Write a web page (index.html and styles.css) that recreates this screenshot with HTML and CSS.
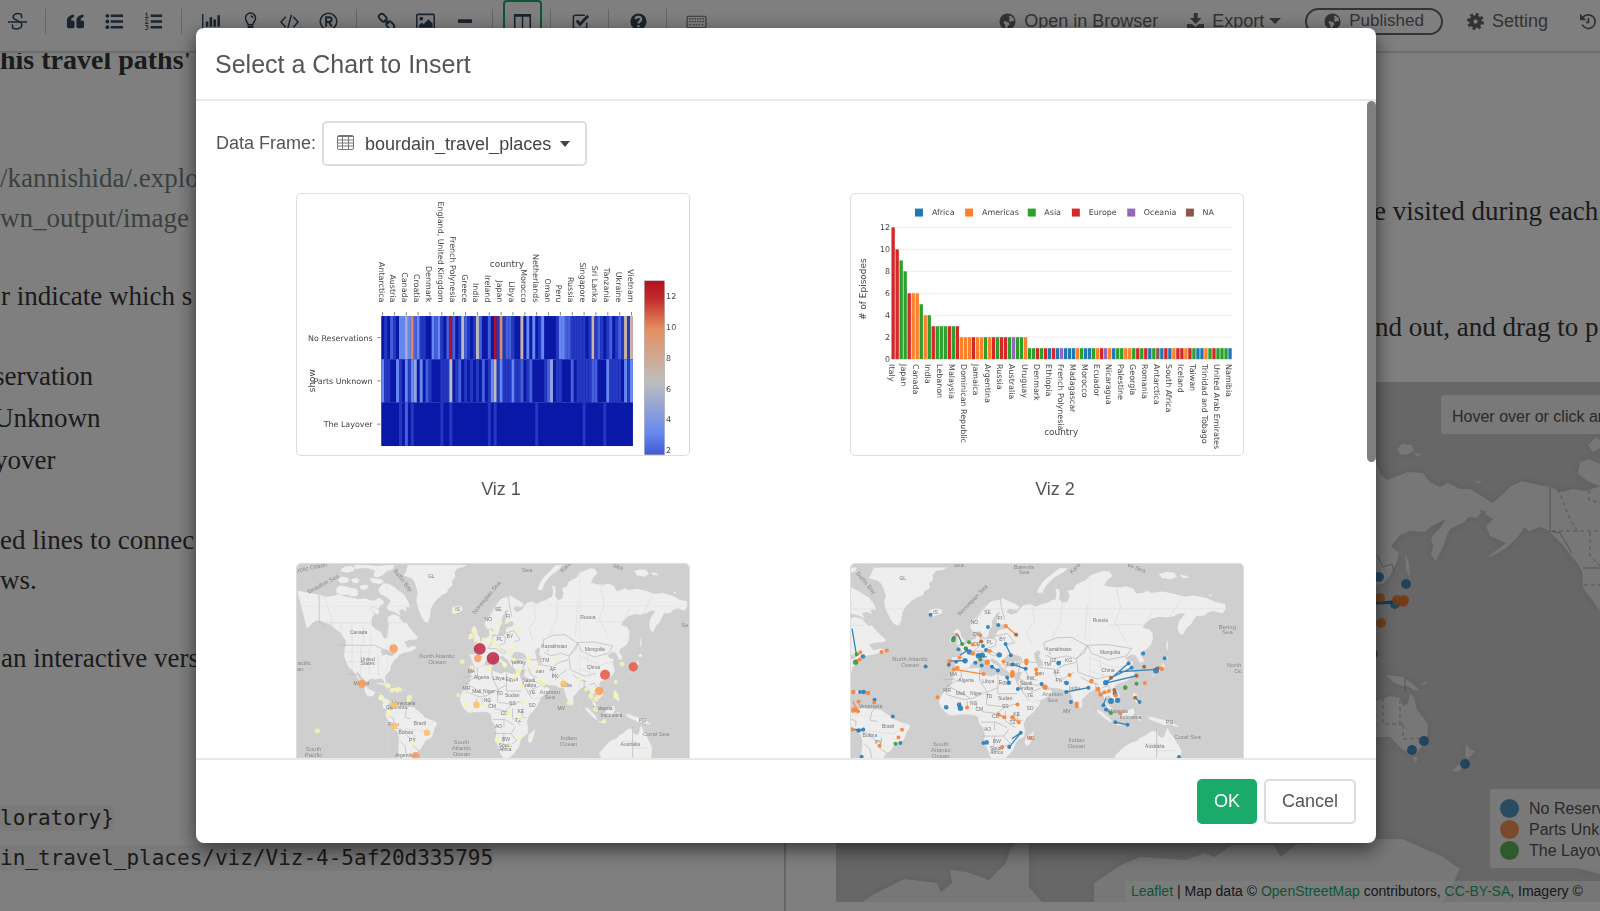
FILE: index.html
```html
<!DOCTYPE html>
<html lang="en">
<head>
<meta charset="utf-8">
<title>Select a Chart to Insert</title>
<link rel="stylesheet" href="styles.css">
</head>
<body>
<div class="app">
  <header class="toolbar">
    <div class="tools">
      <button class="tool" aria-label="Strikethrough"><svg class="icon" viewBox="0 0 20 20"><path d="M0 9.700h20v1.600H0z"/><path class="line" d="M14.500 6.500L14 2.500C9 .5 5 2.500 5.500 6c.4 2.500 8.500 3.500 9 7 .5 4-4.500 6-9.500 4l-.5-4"/></svg></button>
      <i class="sep"></i>
      <button class="tool" aria-label="Quote"><svg class="icon" viewBox="0 0 20 20"><path d="M8.500 3v2.200C6.500 5.500 5.300 7 5.300 9H7c1.200 0 2 .8 2 2v4c0 1.200-.8 2-2 2H3c-1.200 0-2-.8-2-2V9.500C1 5.500 4 3 8.500 3zm10 0v2.200c-2 .3-3.200 1.800-3.200 3.800H17c1.200 0 2 .8 2 2v4c0 1.200-.8 2-2 2h-4c-1.200 0-2-.8-2-2V9.500C11 5.500 14 3 18.500 3z"/></svg></button>
      <button class="tool" aria-label="Bulleted list"><svg class="icon" viewBox="0 0 20 20"><circle cx="2.500" cy="4" r="2"/><circle cx="2.500" cy="10" r="2"/><circle cx="2.500" cy="16" r="2"/><path d="M6 2.700h13v2.600H6zM6 8.700h13v2.600H6zM6 14.700h13v2.600H6z"/></svg></button>
      <button class="tool" aria-label="Numbered list"><svg class="icon" viewBox="0 0 20 20"><path d="M7 2.700h12v2.600H7zM7 8.700h12v2.600H7zM7 14.700h12v2.600H7z"/><path class="fine" d="M1.500 2L3 1v5M1 6h4M1 8.500c2-1.500 3.500 0 2.500 1.300L1.200 12H5M1.200 14.200h3L2.800 16c3-.2 2 3.500-1.800 2.500"/></svg></button>
      <i class="sep"></i>
      <button class="tool" aria-label="Chart"><svg class="icon" viewBox="0 0 20 20"><path d="M0 2h1.500v15H20v1.500H0zM4 10h2.700v5.500H4zM8 5.500h2.700v10H8zM12 8h2.700v7.500H12zM16.200 3.500h2.700v12h-2.700z"/></svg></button>
      <button class="tool" aria-label="Parameter"><svg class="icon" viewBox="0 0 20 20"><path class="line" d="M7.500 13.500c0-2.500-2.800-3.700-2.800-7.200a5.300 5.300 0 0 1 10.600 0c0 3.500-2.800 4.700-2.800 7.200zM10 4.200c1.500 0 2.300.7 2.400 2"/><path d="M7 14.500h6V18l-1.500 1.500h-3L7 18z"/></svg></button>
      <button class="tool" aria-label="Code"><svg class="icon" viewBox="0 0 20 20"><path class="line" d="M6 5l-5 5.500L6 16M14 5l5 5.500-5 5.500M12 3L8 18"/></svg></button>
      <button class="tool" aria-label="R script"><svg class="icon" viewBox="0 0 20 20"><circle class="line" cx="10" cy="10" r="8.700"/><path class="bold" d="M7.500 15.500v-10h3c3.800 0 3.800 5 0 5h-3M10.500 10.500l3 5"/></svg></button>
      <i class="sep"></i>
      <button class="tool" aria-label="Link"><svg class="icon" viewBox="0 0 20 20"><g class="bold"><rect x="1.500" y="3" width="9" height="6" rx="3" transform="rotate(45 6 6)"/><rect x="9.500" y="11" width="9" height="6" rx="3" transform="rotate(45 14 14)"/><path d="M8 8l4.500 4.500"/></g></svg></button>
      <button class="tool" aria-label="Image"><svg class="icon" viewBox="0 0 20 20"><rect class="line" x="0.800" y="2.500" width="18.400" height="16" rx="1"/><circle cx="5.500" cy="7" r="2"/><path d="M3 16.500V14l3-3 2 2 5-5.500 4.500 4.500v4.500z"/></svg></button>
      <button class="tool" aria-label="Horizontal rule"><svg class="icon" viewBox="0 0 20 20"><rect x="3" y="7.500" width="15" height="4" rx="1"/></svg></button>
      <i class="sep"></i>
      <button class="tool tool-active" aria-label="Split view"><svg class="icon" viewBox="0 0 20 20"><path d="M1 2h18v16.500H1zm1.700 3v12h6.500V5zm8.100 0v12h6.500V5z" fill-rule="evenodd"/></svg></button>
      <i class="sep"></i>
      <button class="tool" aria-label="Tasks"><svg class="icon" viewBox="0 0 20 20"><path class="line" d="M16.500 11v4.500a2 2 0 0 1-2 2h-10a2 2 0 0 1-2-2v-10a2 2 0 0 1 2-2h10"/><path class="heavy" d="M6 9l3.500 4L18 4"/></svg></button>
      <i class="sep"></i>
      <button class="tool" aria-label="Help"><svg class="icon" viewBox="0 0 20 20"><circle cx="10" cy="10" r="8.500"/><path class="mark" d="M7 7.500C7.500 4 13 4.500 12.700 8c-.2 2-2.700 2-2.700 4M10 13.700v2.300"/></svg></button>
      <i class="sep"></i>
      <button class="tool" aria-label="Keyboard"><svg class="icon icon-grey" viewBox="0 0 20 20"><rect class="fine" x="1" y="5" width="18" height="11" rx="1"/><path class="fine" d="M3 7.500h14M3 10h14M3 13h2M6.500 13h7M15 13h2" stroke-dasharray="1.500 1"/></svg></button>
    </div>
    <nav class="actions">
      <button class="action"><svg class="icon icon-sm" viewBox="0 0 20 20"><path fill-rule="evenodd" d="M10 .5a9.500 9.500 0 1 0 0 19 9.500 9.500 0 0 0 0-19zM13 3l4 3 1 4-2.500-1-2 1.500-2-2L13 6l-1.500-1.500zM7 9.500l4 1.500 1.500 2-2 2.500-1 2.500-2-1-.5-3.500L5 11z"/></svg>Open in Browser</button>
      <button class="action action-export"><svg class="icon icon-sm" viewBox="0 0 20 20"><path d="M8 0h4.500v6H17l-6.800 7L3.500 6H8zM0 13h6l4 3.500 4-3.500h6v6H0z"/></svg>Export<i class="caret"></i></button>
      <button class="action action-pill"><svg class="icon icon-sm" viewBox="0 0 20 20"><path fill-rule="evenodd" d="M10 .5a9.500 9.500 0 1 0 0 19 9.500 9.500 0 0 0 0-19zM13 3l4 3 1 4-2.500-1-2 1.500-2-2L13 6l-1.500-1.500zM7 9.500l4 1.500 1.500 2-2 2.500-1 2.500-2-1-.5-3.500L5 11z"/></svg>Published</button>
      <button class="action"><svg class="icon icon-sm" viewBox="0 0 20 20"><circle cx="10" cy="10" r="5" fill="none" stroke-width="5" stroke="currentColor"/><circle cx="10" cy="10" r="8" fill="none" stroke="currentColor" stroke-width="4" stroke-dasharray="3.280 3"/></svg>Setting</button>
      <button class="action action-history" aria-label="History"><svg class="icon icon-sm" viewBox="0 0 20 20"><path class="bold" d="M3 6a8 8 0 1 1-.5 7.500M10 5.500V11H7"/><path d="M0 1v7.500h7.500z"/></svg></button>
    </nav>
  </header>
  <main class="panes">
    <section class="pane editor">
      <h2 class="prose headline">his travel paths'</h2>
      <p class="prose prose-link">/kannishida/.explo<br>wn_output/image</p>
      <p class="prose prose-a">r indicate which s</p>
      <ul class="prose prose-list"><li>servation</li><li>Unknown</li><li>yover</li></ul>
      <p class="prose prose-b">ed lines to connec<br>ws.</p>
      <p class="prose prose-a">an interactive vers</p>
      <div class="snippets"><code>loratory}</code><code>in_travel_places/viz/Viz-4-5af20d335795</code></div>
    </section>
    <section class="pane preview">
      <p class="prose caption-a">e visited during each</p>
      <p class="prose caption-b">nd out, and drag to p</p>
      <div class="bigmap">
        <svg class="bigmap-canvas" viewBox="836 382 764 520" preserveAspectRatio="xMinYMin slice" aria-hidden="true">
          <g class="land">
            <path d="M1370 462l7 3 4 10 6 5 8-3 13-5 15 1 7 9 10 5 8-4 12 6 10 0 15 9 11 8-4 7-12-3 1 3-4 5-8-1-6 6-13 6-3 6-4 12-7 14-5-6 2-9-2-7 4-6 6-6 5-8-14 7-7 6-15-1-10 4-9 11 8 7-2 8-7 15-7 8-9 1z"/>
            <path d="M1397 449l5-5 10 1 2 6-8 4-6-1zM1414 452l8 3-6 1zM1475 482l7-2-4 4zM1405 553l4 10 1 14-4-7z"/>
            <path d="M1503 494l8-8 11-5 12 3 16 3 12 5 11-3 13 2 14-5v125l-7-10-6-7-4-7-1-16-5-8-5-6-9-12-8-8-7-7-8-3-11 4-5-4-6 10-13 12-11 6-8 3 20-15-5-2-11-5-4-10 7-7-8-5 5-9z"/>
            <path d="M1588 445l8-8 4 3v8l-7 4zM1580 462l9-3 11 5v22l-11-4-11-8z"/>
            <path d="M1370 703l6-2 14-5 10 2 3 8 5-3 2-9 4 3 3 13 6 7 5 8-1 14-10 14-14-3-7-7-6-6-14 0-6 2zM1412 757h6l-2 6z"/>
            <path d="M1386 675l17 2 9 6 8 8-6-1-7-4-5 0-9-4zM1420 684l8-3-4 4zM1448 713l4 3M1466 743l4 6 5 2-7 8-3-3zM1463 760l3 4-8 8-6-1z"/>
            <path d="M862 902l14-9 28-14 33 4 4 9 11-9-2-13 17 2 22 8 17-17 4-13 7-9h12v46l13 15zM1094 902v-19l27-18 19-8 46 3 19-7 9 4 18-12h42l7 12 14-12 81-6 27 0 24 11 13 5 20 14-7 15-10 18z"/>
            <path d="M1576 868l8-9 16 5v10z"/>
          </g>
          <g class="bigmap-lines">
            <path d="M1550 487v44l10 2 12 20M1583 568h17M1377 555l6 12 9-3 2 8"/>
            <path class="dashed" d="M1558 489l12 30 8 13M1552 531h48M1590 532v24l10 10M1584 585h16M1383 698v26h20M1400 700v24M1403 725v14l24-1M1589 490v10l11 3"/>
            <path d="M1405 678v14"/>
          </g>
          <path d="M1370 603q14 0 25-1" fill="none" stroke="#1f77b4" stroke-width="3"/>
          <g fill="#1f77b4" fill-opacity=".8">
            <circle cx="1379" cy="577" r="5"/><circle cx="1406" cy="584" r="5"/><circle cx="1395" cy="604" r="5"/><circle cx="1373" cy="654" r="5"/><circle cx="1424" cy="741" r="5"/><circle cx="1412" cy="750" r="5"/><circle cx="1465" cy="764" r="5"/>
          </g>
          <g fill="#e87722" fill-opacity=".85">
            <circle cx="1380" cy="598" r="5"/><circle cx="1397" cy="600" r="5"/><circle cx="1403" cy="602" r="5"/><circle cx="1404" cy="600" r="5"/><circle cx="1381" cy="623" r="5"/>
          </g>
        </svg>
        <div class="hint">Hover over or click an</div>
        <ul class="legend">
          <li><i class="dot dot-blue"></i>No Reservations</li>
          <li><i class="dot dot-orange"></i>Parts Unknown</li>
          <li><i class="dot dot-green"></i>The Layover</li>
        </ul>
        <div class="credit"><a href="#leaflet">Leaflet</a> | Map data © <a href="#osm">OpenStreetMap</a> contributors, <a href="#license">CC-BY-SA</a>, Imagery ©</div>
      </div>
    </section>
  </main>
</div>

<div class="overlay">
  <div class="modal" role="dialog" aria-labelledby="modal-title">
    <div class="modal-head"><h1 id="modal-title">Select a Chart to Insert</h1></div>
    <div class="modal-body">
      <div class="frame-row">
        <label for="frame">Data Frame:</label>
        <div class="picker">
          <svg class="picker-icon" viewBox="0 0 17 15"><rect x="0.500" y="0.500" width="16" height="14" rx="1.500"/><path d="M1 1.500h15M1 5h15M1 8h15M1 11h15M5.500 2v12M11.500 2v12"/></svg>
          <select id="frame"><option>bourdain_travel_places</option></select>
          <i class="caret picker-caret"></i>
        </div>
      </div>
      <div class="charts">
        <figure><svg class="thumb" id="heatmap" viewBox="18 25 1180 786"></svg><figcaption>Viz 1</figcaption></figure>
        <figure><svg class="thumb" id="bars" viewBox="31 25 1180 786"></svg><figcaption>Viz 2</figcaption></figure>
        <figure><svg class="thumb thumb-map" id="bubbles" viewBox="18 25 1180 786">
          <g id="world">
            <g class="land">
              <path d="M18 105l20 3 28 5 20 4 22 6 20-3 18-6 14 7 20 4 22 5 24-2 14 6 12 0 12-8 10 4 8 12-12 10-8 10-10 12-8 16 0 20 12 12 14 6 8 14 4 8 8-6 2-20 2-18-4-12 4-12 14-6 18 5 6 12 8 10 8-3 8 14 10 12 12 14 6 8-10 6-18 1-14 6 6 8 4 8 18-6 10 6-10 8-14 5-18 4-12 6-4 8-8 6-8 10-5 10-1 12-8 8-8 10 2 14 5 12-4 5-7-12-2-8-10-4-12 3-14-2-12 6-8 8-2 14 3 14 7 10 12 1 8-3 4-10 12-2 4 4-6 12-2 8 12 2 3 6-2 12 6 8 9 2 6-1 7 4 12-12 12-6 8 4 20 0 18 5 8 8 14 10 8 10 18 8 16 6 4 8-8 14-4 16-6 12-16 8-8 12-6 12-10 8-8 14-8 14-10 4-3 10-15 90-16 0 0-140 2-30-4-20-12-12-14-18-10-18 1-14 6-10 3-14 2-10-6-4-10-4-8-10-12-6-12-4-16-8-10-12-10-16-8-16-6-6 8 20 8 18-8-8-10-18-12-16-12-10-8-16-6-18 2-20 4-24-8-12-8-12-10-8-12-10-10-8-16-6-10-4-14-2-10 6-8 8-12 10z"/>
              <path d="M136 98l12-10 16 4 14 4 18 2 8 10-4 14-18 2-12-6-18 2-16-8zM142 66l14-4 14 4 8 8-10 8-16 2-10-6zM180 70l18-4 10 8-8 10-14-2zM146 46l16-14 20-2 12 8-8 10-20 4zM188 27l40 0 30 3 40-3 16 0-6 14-22 8-8 10-20 8-10-6 4-16-24-8-34 4zM206 90l22-4 8 8-14 10-12-2zM236 66l34 4 12 8-14 8-24-4zM266 96l12-14 16 2 18 10 14 12 16 12 12 20 6 18-14 0 4 14-14-8-10 4 6 16-18-10-18-6-10-8 8-12 6-10-16-12-16-8-6-14zM238 158l14-4 14 10 0 14-16-4z"/>
              <path d="M352 27l180 0-12 8-18 4-8 12 2 14-10 10 2 14-14 12-2 10-16 8-14 12-12 14-8 18-2 22-7 19-10-4-10-14-6-16-7-18-3-20 4-18-4-18-6-18-8-10-14-4-10-4 6-10z"/>
              <path d="M484 158l10-6 12-2 12 6-1 10-12 6-10 4-9-6zM545 218l8-8 8 12 2 14 8 12-2 10-20 4 4-14-2-10-6-8zM536 240l7-8 4 8-4 12-9 2zM250 384l20-2 18 6 18 8-14 2-16-8zM302 400l12-2 14 6-12 4-16-2zM334 402l12 2-4 4z"/>
              <path d="M538 298l22-3 4-8-2-12-10-4 2-8 16-2 8-10 14-6 6-6-2-12 8-8 4 10 2 12 12 2 16-2 8-6 0-12 8-8 10-2 8-6-6-8-12 2-8-6 2-14 6-18-6 2-8 16-4 12 2 12-8 10-2 18-8 8-8-4-4-16-10 2-8-2-7-12 2-16 10-12 8-14 8-14 10-14 14-12 10-6 20 0 12 8 16 8 10 10-8 10-18-4-6 8 10 8 14-6 8-12 8-10 18-4 12 8 14-8 14-4 10-8 8-2 2-14-2-20 10 4 2 16-2 14 10 10 10-4 4-16-6-16 16-4 4-12 10-8 16-8 8-14 14-6 20-8 14 2 8 14-12 12-8 16 16 4 22 2 14-4 18 8 6 14 16-2 10-6 10 6 28-4 24 6 28 10 22-4 30 8 22 12 24 6v18l-8 12-22-8-14 6-6 8-20 2-8 14-4 10-10 10-8 16-2 8-10-8-4-16 4-20 8-12 6-10-14 0-12 8-18 4-16-2-20 6-14 14-6 12 16 4 8 14 0 20-6 18-12 12-10 4-2 10 8 12 0 10-10 2-6-14-4-8-10-2-8 6-6 4 8 8 12 2-4 12 4 14 2 12-8 12-12 10-16 6-8 4-4 8 10 14 4 14-8 10-8 6-4-10-8-8-8 2 2 18 12 14 6 14-6-2-12-14-4-16-2-16-6-14-8-8-8 4-12 8-10 12-8 10 2 16-4 10-8-4-10-18-6-18-4-14-12 0-12-6-20-2-16-4-8-12-6 2 8 12 8 8 12-2 8 10-14 12-16 12-18 10-6-2-6-14-10-16-10-18-6-14 6-18 4-14-16 4-14-2-10-10 2-8 14-4 10-4-10 0-12 0-4 4-2 14-6-10-8-14-14-10-6 2 6 10 16 10-2 10-8 4-4-12-14-10-8-14-12 2-10 6-8 8-6 14-14 6-14-2z"/>
              <path d="M546 336l14 3 18-8 24-2 8 4-4 12 14 6 14 4 12-6 20 6 16 0 8 2 6 22 10 18 8 16 10 14 8 6 22-6-4 14-14 22-18 20-6 18 4 18-2 18-16 12-6 12-4 16-12 16-12 14-12 4-12 0-10-14-6-22-8-20 2-22-4-22-10-14-2-18-10-6-18-2-22 2-16 2-12-10-10-14-6-16 4-18 12-20 14-16zM737 517l-2 20-8 24-8 6-6-10 4-20 12-8z"/>
              <path d="M1046 300l8-6 6 8-8 6zM1046 312l4 14-8 12-20 8 4-8 14-12zM1020 346l6 8-6 2zM1054 240l4 20-2 24-4-16zM978 376l4 6-4 10zM974 404l8 4 2 16 8 8-4 10-10-10-6-14zM886 454l14 8 18 20 8 14-8-2-16-14-14-16zM924 498l18 2 14 4-16 1-14-3zM946 470l14-12 14-8 4 14-8 18-14 4-8-6zM982 472l12-2-6 8 6 12-8 0-4-10zM1006 476l16 2 14 6 20 4 16 10 16 12-14-2-14-8-12 4-10-6-10-4-12-6z"/>
              <path d="M952 568l14-12 16-6 8-10 12-6 8-8 10-6 14 2-2 10 10 8 6-4 4-20 5-6 5 16 8 10 8 18 8 16 4 12-4 34-20 40-120-20-18-40z"/>
              <path d="M742 104l6-18 12-20 22-22 16-16 20 0-10 14-22 16-20 24-10 24zM752 106l12-4-4 6zM1034 46l18-6 20 2 8 14-16 8-22-4zM1082 48l20 4 8 8-18 0zM1150 110l14-2-4 8zM870 442l3 8-4 3zM836 440l5 6-3 8z"/>
            </g>
            <path class="water" d="M664 304l10-14 14 0 16 6 6 12-18 4-20 2zM736 286l10-10 6 6-4 14 8 14 2 14-12 2-6-16zM770 282l8 2-2 8zM270 286l18-4 12 8 14 6-12 6-16-4-10 4z"/>
            <g class="borders">
              <path d="M85 120v78l20 16M142 270h110l30 14 20 18 20-16M172 356l30 2 16 14 8 18M295 482l16 10-2 14M360 446l-12 18-4 24 18 4M310 520l24 4 14 16 16 14M330 560l14 14 4 34M372 540l-4 34 18 14"/>
              <path d="M592 195l20-38 20-30 24-4 2 22 8 40M608 238l-4 28-12 14M632 236l14 10-2 18-22 8M648 234l24-8 18 28-18 6M594 280l24 0 22 14 18-2M560 298l18 8M622 272l26 18M660 320l34-4 8 10-4 24M694 316l14-4 34 2M712 330l12 30 20 8M745 328l40 6 6 34M700 362l20 14 28 8M704 368l26 34 22-10"/>
              <path d="M762 276l-2-22 30-14 36-2 38 26-6 20-22 18-22-8-30 8-20-10M864 262l48-2 58 12-12 22-44 12-40-20zM864 264l-26 40 4 40 46 20 30-10M788 336l20-14 28-8M796 376l16-18 20-14M848 358l22 16 22 6M884 374l0 26 14 16M900 390l14-6 8 12"/>
              <path d="M548 364l-30 2M562 340l0 22-34 22 0 28M530 384l54 38M606 336l0 32 18 34-34 20M650 354l0 54 46 0M650 390l-24 12-4 40M596 432l4 20M624 442l44 6 22-8 12 0M530 412l40 14 20-4M560 430v22M576 430l2 20M612 462l34 6 22-20M608 494h34l0 24M612 536h52l12-20M642 536l-4 54M664 538l16 20-36 24M668 460v30l24 20M700 462l-4 24 14 4M642 492l30 18M1030 516v92"/>
            </g>
            <path class="provinces" d="M100 202h230M100 122l20 60 14 90M150 205l2 65M184 202v68M218 202v68M240 240v30M156 290h90M156 320h110M184 270v80M210 270v95M236 280v80M264 300v62M340 520l60 10 30-30M730 130l8 60-20 30 12 40M804 130l-4 60-20 50M864 140l-6 100M934 90l10 60-14 40 26 60M1020 160l-20 40-80 0M1090 120l-30 60M870 300l60 30 40-10M870 340l50 20M892 300l10 60M796 350l40 40M1076 580h-44M1036 560h-36"/>
            <path class="grat" d="M18 152h1180M18 475h1180M290 25v585M870 25v585"/>
          </g>
        </svg><figcaption>Viz 3</figcaption></figure>
        <figure><svg class="thumb thumb-map" id="routes" viewBox="31 25 1180 786"><use href="#world" transform="matrix(1.26 0 0 1 -345 8)"/></svg><figcaption>Viz 4</figcaption></figure>
      </div>
      <div class="scroll-thumb"></div>
    </div>
    <div class="modal-foot"><button class="btn btn-primary">OK</button><button class="btn">Cancel</button></div>
  </div>
</div>
<script src="charts.js"></script>
</body>
</html>
```
FILE: styles.css
```css
* { box-sizing: border-box; }
body { margin: 0; overflow: hidden; background: #fff; color: #555; font-family: "Helvetica Neue", "Liberation Sans", Arial, sans-serif; font-size: 18px; }
button, select { font: inherit; color: inherit; }
h1, h2, p, ul, figure { margin: 0; padding: 0; }
ul { list-style: none; }

.app { display: flex; flex-direction: column; height: 100vh; overflow: hidden; }

/* toolbar */
.toolbar { display: flex; justify-content: space-between; flex: none; height: 53px; border-bottom: 2px solid #ddd; overflow: hidden; }
.tools { display: flex; align-items: flex-start; margin-left: -2px; color: #34495e; }
.tool { width: 39px; height: 43px; padding: 0; border: 1px solid transparent; border-radius: 4px; background: none; display: grid; place-items: center; flex: none; }
.tool-active { border: 2px solid #1aab6b; }
.sep { width: 1px; height: 25px; margin: 9px 10px 0 8px; background: #ccc; flex: none; }
.icon { width: 19px; height: 19px; display: block; fill: currentColor; flex: none; }
.icon-sm { width: 17px; height: 17px; }
.icon-grey { width: 21px; height: 21px; color: #666; }
.line, .fine, .bold, .heavy { fill: none; stroke: currentColor; stroke-width: 1.6; }
.fine { stroke-width: 1; }
.bold { stroke-width: 2; }
.heavy { stroke-width: 3; }
.mark { fill: none; stroke: #fff; stroke-width: 2.4; }
.actions { display: flex; align-items: center; gap: 24px; height: 42px; padding-right: 3px; color: #666; }
.action { display: flex; align-items: center; gap: 8px; padding: 0; border: 0; background: none; white-space: nowrap; }
.action-export { margin-left: 5px; }
.action-history { margin-left: 8px; }
.action-pill { height: 27px; padding: 0 17px; border: 2px solid #666; border-radius: 14px; font-size: 17px; }
.caret { border: 6px solid transparent; border-top: 6px solid currentColor; border-bottom: 0; }
.action .caret { margin-left: -3px; }

/* document behind the dialog */
.panes { display: flex; flex: 1; min-height: 0; }
.pane { overflow: hidden; white-space: nowrap; }
.editor { flex: 0 0 786px; border-right: 2px solid #ccc; }
.preview { flex: 1; padding-left: 50px; }
.prose { font-family: Georgia, "Liberation Serif", serif; font-size: 27px; line-height: 40px; color: #363636; }
.headline { font-size: 28px; margin-top: -13px; }
.prose-link { margin-top: 78px; color: #72827f; }
.prose-a { margin-top: 38px; padding-left: 1px; }
.prose-list { margin: 40px 0 0 -6px; display: grid; gap: 2px; }
.prose-b { margin-top: 40px; }
.snippets { display: flex; flex-direction: column; align-items: flex-start; gap: 14px; margin-top: 127px; }
.snippets code { font: 21px/26px "DejaVu Sans Mono", monospace; color: #363636; background: #f4f4f4; border-radius: 3px; }
.caption-a { margin-top: 138px; padding-left: 538px; }
.caption-b { margin-top: 76px; padding-left: 539px; }
.bigmap { position: relative; margin-top: 35px; height: 520px; background: #cfcfcf; overflow: hidden; }
.bigmap-canvas { display: block; width: 100%; height: 100%; }
.land { fill: #eee; stroke: #c6c6c6; stroke-width: 1; }
.bigmap .land { stroke: none; filter: drop-shadow(0 0 4px #bbb); }
.bigmap-lines { fill: none; stroke: #aaa; }
.dashed { stroke-dasharray: 4 3; }
.hint { position: absolute; top: 13px; left: 605px; padding: 5px 11px 0; font-size: 16px; line-height: 34px; background: #f2f2f2; border-radius: 3px; color: #555; }
.legend { position: absolute; top: 407px; left: 654px; padding: 9px 10px 7px; font-size: 16px; line-height: 21px; background: #f2f2f2; border-radius: 2px; }
.legend li { display: flex; align-items: center; gap: 10px; }
.dot { width: 19px; height: 19px; border-radius: 50%; opacity: .75; }
.dot-blue { background: #1f77b4; }
.dot-orange { background: #f57520; }
.dot-green { background: #2ca02c; }
.credit { position: absolute; bottom: 0; left: 289px; right: 0; padding: 0 6px; font-size: 14px; line-height: 21px; color: #333; background: rgba(255, 255, 255, .6); }
.credit a { color: #1aab6b; text-decoration: none; }

/* dialog */
.overlay { position: fixed; inset: 0; padding: 28px 224px 68px 196px; background: rgba(0, 0, 0, .5); }
.modal { display: flex; flex-direction: column; height: 100%; background: #fff; border-radius: 8px; box-shadow: 0 6px 20px rgba(0, 0, 0, .6); }
.modal-head { padding: 17px 19px 15px; border-bottom: 2px solid #e8e8e8; }
.modal-head h1 { font-size: 25px; line-height: 39px; font-weight: 400; }
.modal-body { position: relative; flex: 1; min-height: 0; overflow: hidden; padding: 20px 44px 0 28px; }
.frame-row { display: flex; align-items: center; gap: 6px; margin-left: -8px; }
.picker { position: relative; }
.picker select { appearance: none; display: block; width: 265px; height: 45px; padding: 0 20px 0 41px; border: 2px solid #ddd; border-radius: 5px; background: #fff; color: #444; }
.picker-icon { position: absolute; left: 15px; top: 14px; width: 17px; height: 15px; fill: none; stroke: #777; }
.picker-caret { position: absolute; right: 17px; top: 20px; color: #444; border-width: 5px; border-top-width: 6px; border-bottom-width: 0; }
.charts { display: grid; grid-template-columns: 1fr 1fr; row-gap: 62px; margin-top: 27px; }
.charts figure { display: flex; flex-direction: column; align-items: center; }
.thumb { display: block; width: 71%; height: auto; margin-right: 16px; border: 1px solid #ddd; border-radius: 5px; overflow: hidden; }
.thumb-map { background: #cfcfcf; }
figcaption { margin-top: 21px; line-height: 24px; }
.scroll-thumb { position: absolute; top: 0; right: 0; width: 9px; height: 55%; border-radius: 5px; background: #808080; }
.modal-foot { display: flex; justify-content: flex-end; align-items: flex-start; gap: 7px; padding: 19px 20px; border-top: 2px solid #e8e8e8; }
.btn { height: 45px; padding: 0 16px; border: 2px solid #ddd; border-radius: 5px; background: #fff; }
.btn-primary { padding: 0 15px; border-color: #1aab6b; background: #1aab6b; color: #fff; }

/* chart thumbnails */
.plot-text { font-family: Verdana, "DejaVu Sans", sans-serif; font-size: 24px; fill: #444; }
.plot-title { font-size: 27px; }
.tick { stroke: #444; stroke-width: 2; }
.gridline { stroke: #eee; stroke-width: 3; }
.water { fill: #cfcfcf; }
.borders { fill: none; stroke: #b8b8b8; stroke-width: 2; }
.provinces { fill: none; stroke: #d2d2d2; stroke-width: 2; stroke-dasharray: 5 3; }
.grat { fill: none; stroke: #dadada; }
.map-text { font-family: "Liberation Sans", Arial, sans-serif; font-size: 15px; fill: #777; text-anchor: middle; }
.sea-text { font-size: 18px; fill: #8a8a8a; }
```
FILE: charts.js
```js
const NS = "http://www.w3.org/2000/svg";

function add(parent, tag, attrs, text) {
  const node = document.createElementNS(NS, tag);
  for (const key in attrs) node.setAttribute(key, attrs[key]);
  if (text !== undefined) node.textContent = text;
  parent.appendChild(node);
  return node;
}

function label(svg, x, y, text, anchor, angle, extra) {
  const attrs = { x, y, class: "plot-text " + (extra || ""), "text-anchor": anchor };
  if (angle) attrs.transform = `rotate(${angle} ${x} ${y})`;
  add(svg, "text", attrs, text);
}

/* Viz 1: episodes by show and country, one hex digit per country */
(function () {
  const svg = document.getElementById("heatmap");
  const colors = ["#0a18a8", "#2438c0", "#4560d8", "#6688f0", "#90a4e0", "#a4aed0", "#bcbcbc", "#c8b4a4", "#d0a484", "#d89468", "#e08858", "#d06040", "#c03030", "#b41020"];
  const rows = [
    ["No Reservations", "0102103353A23110032310" + "2D201621016200" + "20D191221007" + "0303013000013322111110171210120121717"],
    ["Parts Unknown", "3110031031" + "3403021000" + "1116012010" + "1010201361" + "3111311201" + "2000012401" + "1000201111" + "1220003111" + "10313"],
    ["The Layover", "0000001020" + "1000000000" + "1001000000" + "0000001010" + "0".repeat(12) + "1" + "0".repeat(15) + "1" + "0000001" + "0".repeat(9)]
  ];
  const step = 759 / 85;
  rows.forEach(([name, cells], r) => {
    const top = 393 + r * 130.5;
    add(svg, "rect", { x: 272, y: top, width: 759, height: 131, fill: colors[0] });
    [...cells].forEach((c, i) => {
      if (c !== "0") add(svg, "rect", { x: 272 + i * step, y: top, width: step, height: 130.5, fill: colors[parseInt(c, 16)] });
    });
    label(svg, 246, top + 74, name, "end");
    add(svg, "path", { class: "tick", d: `M260 ${top + 65}h10` });
  });
  const names = ["Antarctica", "Austria", "Canada", "Croatia", "Denmark", "England, United Kingdom", "French Polynesia", "Greece", "India", "Ireland", "Japan", "Libya", "Morocco", "Netherlands", "Oman", "Peru", "Russia", "Singapore", "Sri Lanka", "Tanzania", "Ukraine", "Vietnam"];
  names.forEach((name, i) => {
    const x = 276 + i * 35.75;
    add(svg, "path", { class: "tick", d: `M${x} 381v10` });
    label(svg, x - 12, 352, name, "end", 90);
  });
  label(svg, 651, 246, "country", "middle", 0, "plot-title");
  label(svg, 71, 588, "show", "middle", -90, "plot-title");
  const grad = add(add(svg, "defs", {}), "linearGradient", { id: "scale", x1: 0, y1: 0, x2: 0, y2: 1 });
  [[0, "#b41020"], [.1, "#c22a2a"], [.28, "#e49060"], [.58, "#bebebe"], [.88, "#6688f0"], [1, "#4058d4"]].forEach(([o, c]) => add(grad, "stop", { offset: o, "stop-color": c }));
  add(svg, "rect", { x: 1066, y: 287, width: 60, height: 524, fill: "url(#scale)", stroke: "#777" });
  [12, 10, 8, 6, 4, 2].forEach((v, i) => label(svg, 1131, 342 + i * 93, v, "start"));
})();

/* Viz 2: episodes per country, coloured by continent */
(function () {
  const svg = document.getElementById("bars");
  const palette = { B: "#1f77b4", O: "#ff7f2a", G: "#2ca02c", R: "#d62728", P: "#9467bd", N: "#8c564b" };
  [0, 2, 4, 6, 8, 10, 12].forEach(v => {
    const y = 523 - v * 33.1;
    add(svg, "path", { class: "gridline", d: `M152 ${y}H1180` });
    label(svg, 149, y + 9, v, "end");
  });
  const kinds = "RRGGROOGOGRGGGRGR" + "OOOROOGORGRRGPGGO" + "GGRGRBRBPBBBOGBBGORPOBGGOOGRGRBGNBRBORRORGBBOGRGGGB";
  const counts = [12, 10, 9, 8, 6, 6, 6, 5, 4, 4, 3, 3, 3, 3, 3, 3, 3];
  const step = 1028 / 85;
  [...kinds].forEach((k, i) => {
    const value = i < 17 ? counts[i] : i < 34 ? 2 : 1;
    add(svg, "rect", { x: 153 + i * step, y: 523 - value * 33.1, width: step - 2, height: value * 33.1, fill: palette[k] });
  });
  const names = ["Italy", "Japan", "Canada", "India", "Lebanon", "Malaysia", "Dominican Republic", "Jamaica", "Argentina", "Russia", "Australia", "Uruguay", "Denmark", "Ethiopia", "French Polynesia", "Madagascar", "Morocco", "Ecuador", "Nicaragua", "Palestine", "Georgia", "Romania", "Antarctica", "South Africa", "Iceland", "Taiwan", "Trinidad and Tobago", "United Arab Emirates", "Namibia"];
  names.forEach((name, i) => label(svg, 146 + i * step * 3, 538, name, "start", 90));
  label(svg, 665, 753, "country", "middle", 0, "plot-title");
  label(svg, 77, 312, "# of Episodes", "middle", -90, "plot-title");
  [["B", 224, "Africa", 275], ["O", 375, "Americas", 426], ["G", 564, "Asia", 614], ["R", 697, "Europe", 748], ["P", 864, "Oceania", 914], ["N", 1041, "NA", 1091]].forEach(([k, x, name, tx]) => {
    add(svg, "rect", { x, y: 69, width: 24, height: 24, fill: palette[k] });
    label(svg, tx, 89, name, "start");
  });
})();

function mapText(svg, items, cls) {
  items.forEach(([x, y, text, angle]) => {
    const attrs = { x, y, class: "map-text " + (cls || "") };
    if (angle) attrs.transform = `rotate(${angle} ${x} ${y})`;
    add(svg, "text", attrs, text);
  });
}

function dots(svg, points, fill, opacity) {
  points.forEach(([x, y, r]) => add(svg, "circle", { cx: x, cy: y, r: r || 6, fill, "fill-opacity": opacity }));
}

/* Viz 3: bubble map */
(function () {
  const svg = document.getElementById("bubbles");
  mapText(svg, [[204, 237, "Canada"], [231, 317, "United"], [231, 330, "States"], [423, 66, "GL"], [502, 168, "IS"], [595, 198, "NO"], [625, 168, "SE"], [654, 187, "FI"], [895, 192, "Russia"], [794, 279, "Kazakhstan"], [916, 287, "Mongolia"], [912, 342, "China"], [629, 258, "PL"], [660, 249, "BY"], [686, 326, "Turkey"], [574, 372, "Algeria"], [626, 376, "Libya"], [666, 379, "Egypt"], [717, 382, "Saudi"], [717, 395, "Arabia"], [529, 404, "MR"], [560, 413, "Mali"], [597, 413, "Niger"], [629, 420, "TD"], [667, 427, "Sudan"], [727, 418, "YE"], [727, 456, "SO"], [592, 442, "NG"], [606, 460, "CM"], [668, 450, "SS"], [693, 474, "KE"], [643, 481, "CD"], [685, 500, "TZ"], [626, 521, "AO"], [648, 558, "BW"], [646, 577, "South"], [646, 590, "Africa"], [830, 396, "India"], [750, 354, "Iran"], [790, 348, "AF"], [796, 370, "PK"], [768, 322, "TM"], [544, 353, "MA"], [815, 465, "MV"], [212, 389, "Mexico"], [340, 450, "Venezuela"], [318, 463, "Colombia"], [389, 511, "Brazil"], [346, 538, "Bolivia"], [366, 561, "PY"], [346, 608, "Argentina"], [309, 513, "Peru"], [940, 466, "Malaysia"], [966, 486, "Indonesia"], [1060, 500, "PG"], [1023, 573, "Australia"]]);
  mapText(svg, [[440, 309, "North Atlantic"], [440, 327, "Ocean"], [514, 568, "South"], [514, 586, "Atlantic"], [514, 603, "Ocean"], [837, 555, "Indian"], [837, 573, "Ocean"], [68, 588, "South"], [68, 606, "Pacific"], [40, 331, "acific"], [28, 347, "an"], [780, 417, "Arabian"], [780, 432, "Sea"], [1101, 543, "Coral Sea"], [712, 48, "Sea"], [100, 90, "Beaufort Sea", -28], [333, 78, "Baffin Bay", 52], [594, 130, "Norwegian Sea", -50], [60, 42, "Arctic Ocean", -12], [1188, 214, "Se"], [832, 38, "Kara", -45], [984, 38, "Sea", 20]], "sea-text");
  dots(svg, [[491, 170], [552, 228, 8], [545, 243, 8], [565, 257], [581, 252], [608, 232], [627, 206], [650, 200], [684, 222, 7], [603, 254], [612, 264, 7], [626, 276, 7], [654, 291, 7], [673, 275, 7], [644, 330, 7], [671, 313], [516, 320, 7], [545, 336], [597, 344, 8], [686, 347, 8], [672, 366, 7], [684, 356, 7], [717, 311, 7], [717, 333], [741, 341], [797, 314, 7], [698, 392], [752, 380, 7], [762, 387, 7], [871, 370, 7], [504, 420], [528, 449, 7], [577, 448], [657, 475, 8], [698, 440, 7], [690, 488, 7], [688, 546, 7], [622, 555, 9], [662, 569], [727, 543], [838, 445, 7], [891, 403, 7], [904, 423, 8], [914, 402], [920, 432, 8], [979, 380], [980, 423, 9], [998, 327, 7], [918, 462, 8], [944, 499, 7], [292, 392, 8], [304, 406, 7], [320, 404, 8], [328, 404, 7], [272, 428, 8], [293, 440], [357, 427, 8], [355, 436], [295, 477, 8], [370, 566, 7], [79, 528, 8], [1069, 606]], "#f6f3b0", .85);
  dots(svg, [[312, 451, 10], [311, 513, 10], [410, 534, 10], [559, 450, 10], [822, 386, 10]], "#fbc268", .9);
  dots(svg, [[309, 280, 13], [563, 310, 11], [214, 386, 13], [929, 408, 13], [376, 604, 12]], "#fa9a58", .85);
  dots(svg, [[1032, 335, 14], [947, 359, 15]], "#ea5540", .85);
  dots(svg, [[569, 281, 18], [609, 309, 19]], "#c1304f", .9);
})();

/* Viz 4: travel routes */
(function () {
  const svg = document.getElementById("routes");
  mapText(svg, [[187, 74, "GL"], [286, 177, "IS"], [403, 206, "NO"], [443, 177, "SE"], [480, 194, "FI"], [783, 200, "Russia"], [657, 288, "Kazakhstan"], [812, 295, "Mongolia"], [806, 350, "China"], [449, 266, "PL"], [488, 257, "BY"], [410, 242, "DK"], [410, 271, "DE"], [520, 333, "Turkey"], [378, 380, "Algeria"], [445, 385, "Libya"], [496, 388, "Egypt"], [559, 391, "Saudi"], [559, 404, "Arabia"], [321, 412, "MR"], [361, 421, "Mali"], [408, 421, "Niger"], [447, 428, "TD"], [496, 435, "Sudan"], [571, 426, "YE"], [571, 464, "SO"], [401, 450, "NG"], [418, 468, "CM"], [496, 458, "SS"], [530, 482, "KE"], [467, 489, "CD"], [518, 508, "TZ"], [443, 528, "AO"], [471, 566, "BW"], [470, 585, "South"], [470, 598, "Africa"], [705, 404, "India"], [600, 360, "Iran"], [651, 356, "AF"], [658, 380, "PK"], [623, 332, "TM"], [640, 322, "UZ"], [687, 322, "KG"], [572, 375, "KW"], [340, 362, "MA"], [682, 473, "MV"], [90, 458, "Venezuela"], [143, 519, "Brazil"], [88, 546, "Bolivia"], [114, 569, "PY"], [836, 473, "Malaysia"], [874, 493, "Indonesia"], [992, 508, "PG"], [947, 580, "Australia"], [573, 555, "MG"]]);
  mapText(svg, [[209, 317, "North Atlantic"], [209, 335, "Ocean"], [302, 575, "South"], [302, 593, "Atlantic"], [302, 610, "Ocean"], [711, 562, "Indian"], [711, 580, "Ocean"], [639, 424, "Arabian"], [639, 440, "Sea"], [1046, 552, "Coral Sea"], [553, 40, "Barents"], [553, 56, "Sea"], [1166, 220, "Bering"], [1166, 236, "Sea"], [1186, 337, "North"], [1198, 354, "Oc"], [72, 86, "Baffin Bay", 50], [402, 138, "Norwegian Sea", -46], [710, 42, "Kara", -45], [890, 42, "ev Sea", 22], [355, 34, "Sea"]], "sea-text");
  const line = (d, stroke) => add(svg, "path", { d, fill: "none", stroke, "stroke-width": 4, "stroke-linejoin": "round" });
  line("M34 220L47 297M353 237L366 266M497 266L513 300M518 328L558 341M502 367L507 384M680 411L747 398M799 384L868 324L838 350L952 343M799 384L892 362M815 368L877 338M791 451L800 430M800 464L814 474M828 502L865 510M508 577L543 534M516 552L543 534M409 300L440 306M360 300L384 284M654 324L664 319M673 380L684 386M456 335L474 346M888 428L901 441M40 524L68 525M330 318L380 316", "#3a87bd");
  line("M498 212L529 238M341 343L431 357M476 479L493 487M518 488L537 502M776 402L783 419L809 408M36 440L54 470M589 343L591 357M45 316L64 313", "#fd8a3c");
  dots(svg, [[271, 178], [444, 215], [475, 209], [341, 248], [355, 282], [429, 272], [378, 281], [388, 290, 8], [416, 302, 9], [427, 300, 8], [438, 284], [478, 299, 8], [406, 323], [326, 329], [256, 334], [375, 317, 8], [348, 320], [456, 335], [474, 346], [513, 300], [497, 266], [518, 328], [558, 341], [425, 331], [502, 367], [507, 384], [534, 402], [606, 387], [657, 324, 7], [681, 384, 7], [680, 411], [747, 398], [694, 441], [318, 457, 7], [357, 450, 7], [361, 460, 8], [102, 434], [58, 411], [69, 411, 7], [157, 485], [54, 527, 7], [68, 524], [180, 565], [67, 304, 7], [430, 565], [440, 563, 7], [508, 577], [543, 534], [799, 383, 8], [868, 324], [877, 338], [951, 346, 9], [977, 309], [912, 295], [792, 451], [815, 438, 9], [835, 436, 8], [827, 415, 7], [800, 464], [828, 502], [865, 510], [901, 441], [63, 606], [1020, 607]], "#2a7cb8", .9);
  dots(svg, [[498, 212], [349, 238], [421, 240], [398, 268], [398, 295, 7], [449, 287], [442, 321, 8], [328, 318], [358, 308], [341, 343], [352, 338], [431, 357], [491, 319], [560, 317, 7], [560, 324], [589, 343], [591, 357], [518, 352, 7], [517, 362, 7], [616, 396, 8], [690, 360], [756, 378, 7], [712, 446, 6], [712, 454], [123, 290], [139, 286], [59, 291], [57, 313], [292, 427], [381, 458], [38, 411, 7], [82, 414, 7], [54, 440], [40, 465, 8], [52, 470], [101, 443], [185, 525], [174, 548], [117, 573], [476, 479], [493, 487], [518, 488, 7], [537, 502], [533, 449], [487, 577], [572, 549], [776, 402, 7], [783, 419], [795, 412], [809, 408], [829, 421, 7], [843, 475], [917, 384], [968, 341, 7], [36, 524]], "#fd8032", .9);
  dots(svg, [[529, 238], [424, 259], [815, 368], [892, 362], [915, 335], [888, 428], [956, 339], [825, 405]], "#a5622c", .9);
  dots(svg, [[339, 254, 7], [387, 261], [366, 266], [377, 279], [421, 313], [48, 297], [45, 321, 8], [892, 386], [858, 398, 7], [815, 474], [165, 567]], "#379a33", .9);
})();
```
